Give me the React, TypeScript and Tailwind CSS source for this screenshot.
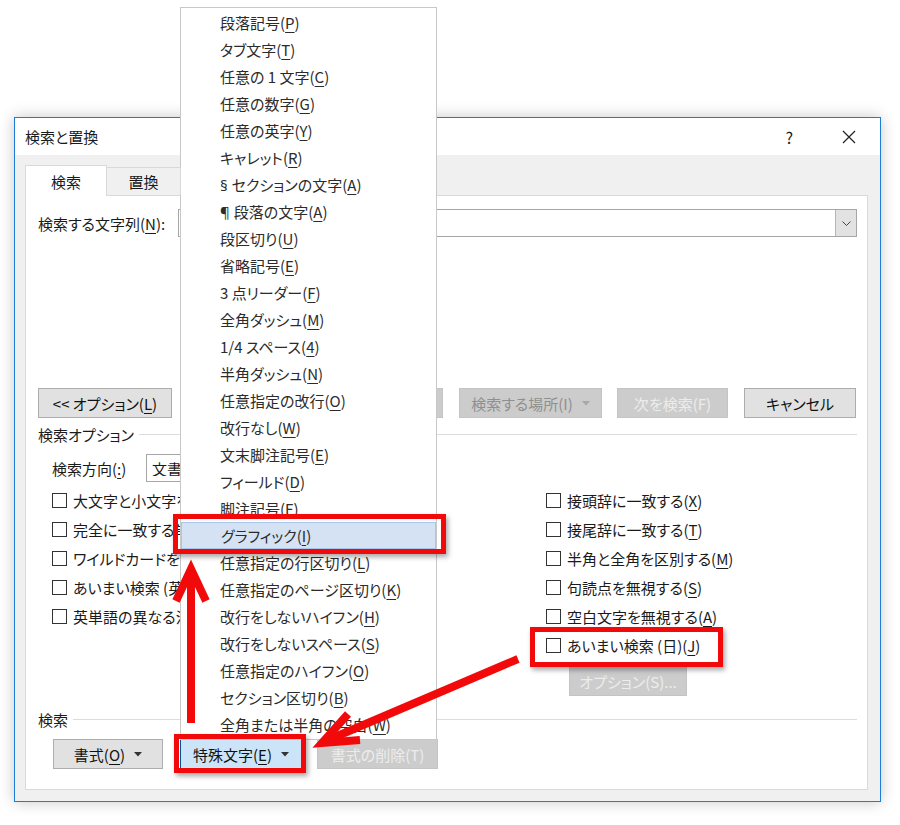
import React from 'react'

type Mn = { pre: React.ReactNode; k: string; post?: string }

function Label({ pre, k, post = '', u = true }: Mn & { u?: boolean }) {
  return (
    <span>
      {pre}(<span className={u ? 'underline underline-offset-[3px] decoration-1' : ''}>{k}</span>){post}
    </span>
  )
}

const latin = "font-['Noto_Sans',sans-serif]"

const menuItems: Mn[] = [
  { pre: '段落記号', k: 'P' },
  { pre: 'タブ文字', k: 'T' },
  { pre: '任意の 1 文字', k: 'C' },
  { pre: '任意の数字', k: 'G' },
  { pre: '任意の英字', k: 'Y' },
  { pre: 'キャレット', k: 'R' },
  {
    pre: (
      <>
        <span className={latin}>§ </span>セクションの文字
      </>
    ),
    k: 'A',
  },
  {
    pre: (
      <>
        <span className={latin}>¶ </span>段落の文字
      </>
    ),
    k: 'A',
  },
  { pre: '段区切り', k: 'U' },
  { pre: '省略記号', k: 'E' },
  { pre: '3 点リーダー', k: 'F' },
  { pre: '全角ダッシュ', k: 'M' },
  { pre: '1/4 スペース', k: '4' },
  { pre: '半角ダッシュ', k: 'N' },
  { pre: '任意指定の改行', k: 'O' },
  { pre: '改行なし', k: 'W' },
  { pre: '文末脚注記号', k: 'E' },
  { pre: 'フィールド', k: 'D' },
  { pre: '脚注記号', k: 'F' },
  { pre: 'グラフィック', k: 'I' },
  { pre: '任意指定の行区切り', k: 'L' },
  { pre: '任意指定のページ区切り', k: 'K' },
  { pre: '改行をしないハイフン', k: 'H' },
  { pre: '改行をしないスペース', k: 'S' },
  { pre: '任意指定のハイフン', k: 'O' },
  { pre: 'セクション区切り', k: 'B' },
  { pre: '全角または半角の空白', k: 'W' },
]

const leftChecks: Mn[] = [
  { pre: '大文字と小文字を区別する', k: 'H' },
  { pre: '完全に一致する単語だけを検索する', k: 'Y' },
  { pre: 'ワイルドカードを使用する', k: 'U' },
  { pre: 'あいまい検索 (英)', k: 'K' },
  { pre: '英単語の異なる活用形も検索する', k: 'W' },
]

const rightChecks: Mn[] = [
  { pre: '接頭辞に一致する', k: 'X' },
  { pre: '接尾辞に一致する', k: 'T' },
  { pre: '半角と全角を区別する', k: 'M' },
  { pre: '句読点を無視する', k: 'S' },
  { pre: '空白文字を無視する', k: 'A' },
  { pre: 'あいまい検索 (日)', k: 'J' },
]

function Caret({ light = false }: { light?: boolean }) {
  return (
    <svg width="8" height="5" viewBox="0 0 8 5" className="ml-[9px]">
      <path d="M0 0 H8 L4 4.5 Z" fill={light ? '#a8a8a8' : '#333'} />
    </svg>
  )
}

function Btn({ children, className = '' }: { children: React.ReactNode; className?: string }) {
  return (
    <div className={`h-[30px] flex items-center justify-center bg-[#e1e1e1] border border-[#adadad] text-[#111] ${className}`}>
      {children}
    </div>
  )
}

function Disabled({ children, className = '', pale = false }: { children?: React.ReactNode; className?: string; pale?: boolean }) {
  return (
    <div
      className={`h-[30px] flex items-center justify-center bg-[#cccccc] border border-[#c4c4c4] ${
        pale ? 'text-[#ececec]' : 'text-[#8f8f8f]'
      } ${className}`}
    >
      {children}
    </div>
  )
}

function Check({ item }: { item: Mn }) {
  return (
    <div className="h-[29px] flex items-center">
      <span className="w-[15px] h-[15px] border border-[#333] bg-white shrink-0" />
      <span className="ml-[6px] whitespace-nowrap">
        <Label {...item} />
      </span>
    </div>
  )
}

export default function App() {
  return (
    <div className="relative w-[900px] h-[825px] bg-white overflow-hidden text-[15px] leading-none text-[#1a1a1a] font-['Noto_Sans_CJK_JP','Noto_Sans',sans-serif] [font-feature-settings:'palt']">
      <div className="pt-[117px] pl-[14px]">
        {/* dialog */}
        <div className="w-[867px] h-[685px] border border-[#1a7fd4] bg-[#f0f0f0] flex flex-col shadow-[0_0_14px_rgba(0,0,0,0.22)]">
          <div className="h-[37px] bg-white flex items-center pl-[10px] pr-[24px]">
            <span>検索と置換</span>
            <span className="ml-auto text-[16px]">?</span>
            <svg width="14" height="14" viewBox="0 0 14 14" className="ml-[49px]">
              <path d="M1 1 L13 13 M13 1 L1 13" stroke="#222" strokeWidth="1.2" />
            </svg>
          </div>

          <div className="flex-1 flex flex-col pl-[10px] pr-[12px] pt-[10px] pb-[11px]">
            {/* tabs */}
            <div className="flex h-[31px] -mb-px relative z-10">
              <div className="w-[82px] h-[31px] bg-white border border-b-0 border-[#d9d9d9] flex items-center justify-center">
                検索
              </div>
              <div className="w-[74px] mt-[2px] h-[28px] bg-[#f0f0f0] border border-l-0 border-b-0 border-[#d9d9d9] flex items-center justify-center">
                置換
              </div>
            </div>

            {/* panel */}
            <div className="flex-1 bg-white border border-[#d9d9d9] flex flex-col">
              <div className="mt-[13px] h-[28px] flex items-center pl-[12px] pr-[10px]">
                <span className="w-[140px] shrink-0">
                  検索する文字列<Label pre="" k="N" />:
                </span>
                <div className="flex-1 h-full border border-[#a6a6a6] flex justify-end">
                  <div className="w-[21px] h-full bg-[#e2e2e2] border-l border-[#b5b5b5] flex items-center justify-center">
                    <svg width="9" height="5" viewBox="0 0 9 5">
                      <path d="M0.5 0.5 L4.5 4.5 L8.5 0.5" stroke="#444" fill="none" />
                    </svg>
                  </div>
                </div>
              </div>

              <div className="mt-[151px] h-[30px] flex items-center pl-[12px] pr-[11px]">
                <Btn className="w-[134px]">
                  {'<< '}オプション<Label pre="" k="L" />
                </Btn>
                {/* 読み取り強調表示: almost fully under the menu */}
                <Disabled className="ml-auto w-[143px]" />
                <Disabled className="ml-[16px] w-[143px]">
                  検索する場所(I)
                  <Caret light />
                </Disabled>
                <Disabled className="ml-[15px] w-[111px]" pale>
                  次を検索(F)
                </Disabled>
                <Btn className="ml-[16px] w-[112px]">キャンセル</Btn>
              </div>

              <div className="mt-[6px] h-[20px] flex items-center pl-[12px] pr-[10px]">
                <span>検索オプション</span>
                <div className="flex-1 h-px bg-[#dcdcdc] ml-[5px]" />
              </div>

              <div className="mt-[10px] h-[28px] flex items-center pl-[26px]">
                <span className="w-[94px]">
                  検索方向<Label pre="" k=":" />
                </span>
                <div className="w-[110px] h-full border border-[#a6a6a6] flex items-center pl-[5px] overflow-hidden">
                  <span className="w-[30px] overflow-hidden whitespace-nowrap">文書全体</span>
                </div>
              </div>

              <div className="mt-[4px] flex">
                <div className="pl-[26px] w-[520px] flex flex-col">
                  <div className="w-[130px] overflow-hidden">
                    {leftChecks.map((c, i) => (
                      <Check key={i} item={c} />
                    ))}
                  </div>
                </div>
                <div className="flex flex-col">
                  {rightChecks.map((c, i) => (
                    <Check key={i} item={c} />
                  ))}
                  <Disabled className="mt-[6px] ml-[23px] w-[118px]" pale>
                    オプション(S)...
                  </Disabled>
                </div>
              </div>

              <div className="mt-[13px] h-[20px] flex items-center pl-[12px] pr-[10px]">
                <span>検索</span>
                <div className="flex-1 h-px bg-[#dcdcdc] ml-[5px]" />
              </div>

              <div className="mt-[10px] h-[30px] flex items-center pl-[27px]">
                <Btn className="w-[110px]">
                  書式<Label pre="" k="O" />
                  <Caret />
                </Btn>
                <div className="ml-[17px] w-[122px] h-[30px] flex items-center justify-center bg-[#cce4f7] border border-[#005499] text-[#111]">
                  特殊文字<Label pre="" k="E" />
                  <Caret />
                </div>
                <Disabled className="ml-[15px] w-[121px]" pale>
                  書式の削除(T)
                </Disabled>
              </div>
            </div>
          </div>
        </div>
      </div>

      {/* dropdown menu */}
      <div className="absolute left-[180px] top-[7px] w-[257px] bg-white border border-[#c8c8c8] py-px">
        {menuItems.map((m, i) => (
          <div
            key={i}
            className={`h-[27px] flex items-center pl-[39px] text-[#2b2b2b] whitespace-nowrap ${
              i === 19 ? 'bg-[#d5e2f4] border border-[#a9c5ea]' : ''
            }`}
          >
            <Label {...m} />
          </div>
        ))}
      </div>

      {/* annotation boxes */}
      <div className="absolute left-[173px] top-[514px] w-[273px] h-[40px] border-[5px] border-[#f20a0a] shadow-[2px_3px_5px_rgba(0,0,0,0.35)]" />
      <div className="absolute left-[530px] top-[627px] w-[193px] h-[40px] border-[5px] border-[#f20a0a] shadow-[2px_3px_5px_rgba(0,0,0,0.35)]" />
      <div className="absolute left-[174px] top-[734px] w-[132px] h-[39px] border-[5px] border-[#f20a0a] shadow-[2px_3px_5px_rgba(0,0,0,0.35)]" />

      {/* arrows */}
      <svg className="absolute left-0 top-0 pointer-events-none" width="900" height="825" viewBox="0 0 900 825">
        <g stroke="#f20a0a" strokeWidth="8" fill="none">
          <path d="M191 723 V574" />
          <path d="M176 601 L191 569 L206 601" strokeLinejoin="miter" />
          <path d="M518 659 L328 740" />
          <path d="M348 714 L322 743 L360 740" strokeLinejoin="miter" />
        </g>
      </svg>
    </div>
  )
}
